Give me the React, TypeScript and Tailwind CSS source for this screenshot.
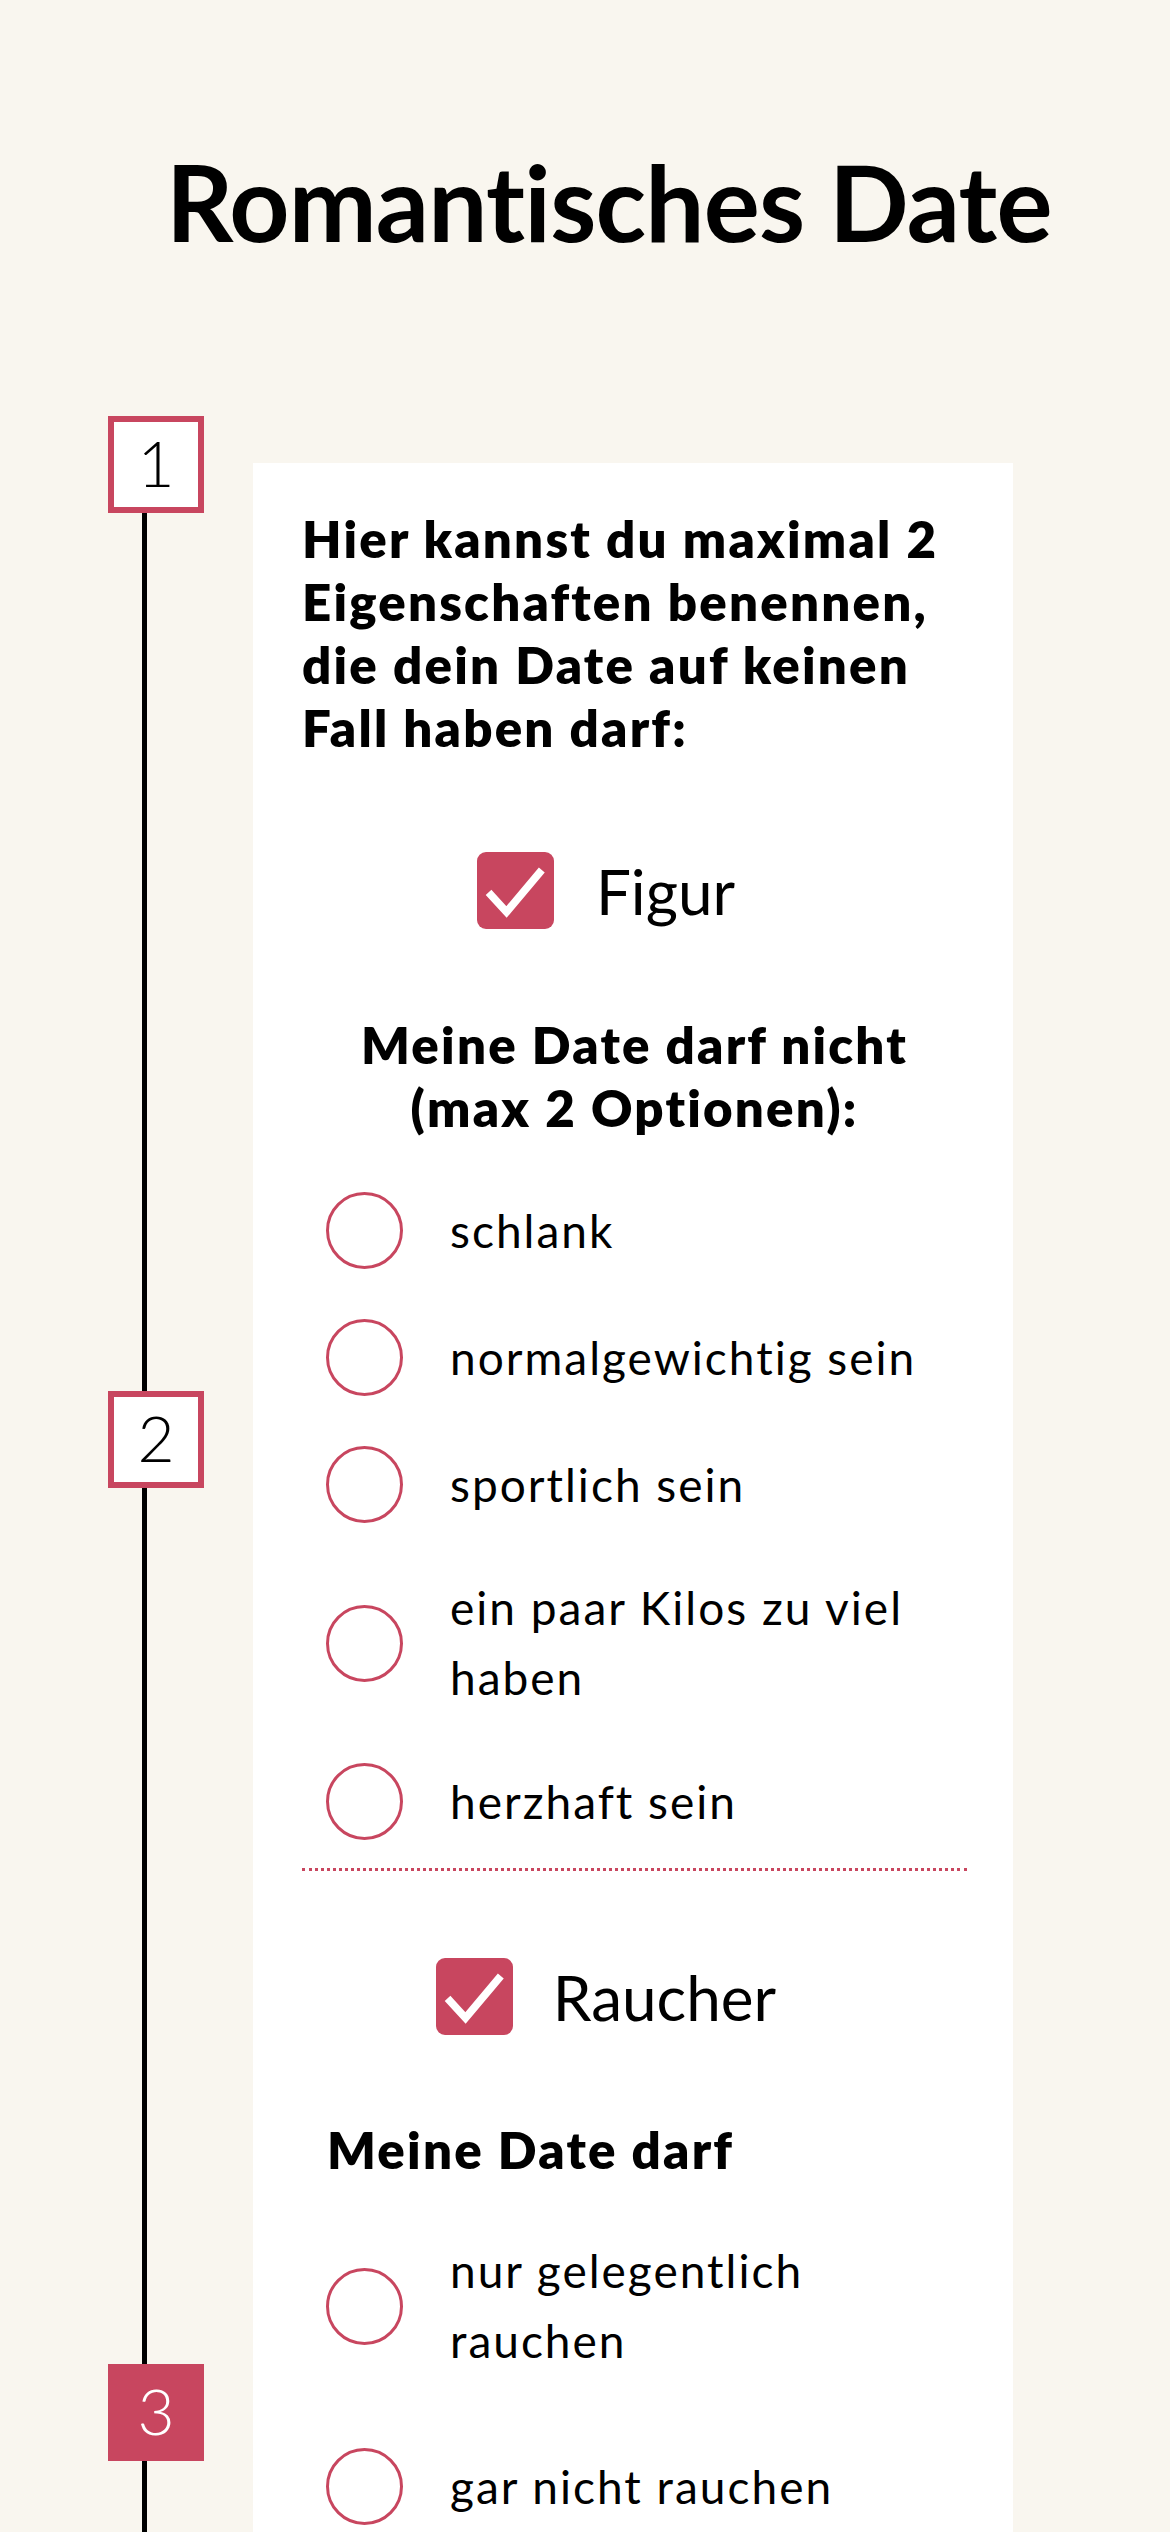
import React from 'react'

function StepBox({ n, filled }: { n: number; filled?: boolean }) {
    return (
        <div
            className={
                filled
                    ? 'flex h-[97px] w-[96px] items-center justify-center bg-[#c8465f] pb-[4px] text-[64px] font-light leading-none text-white'
                    : 'flex h-[97px] w-[96px] items-center justify-center border-[6px] border-[#c8465f] bg-white pb-[4px] text-[64px] font-light leading-none text-black'
            }
        >
            {n}
        </div>
    )
}

function Segment({ h }: { h: string }) {
    return <div className={`ml-[34px] w-[5px] bg-black ${h}`} />
}

function CheckBox() {
    return (
        <div className="flex h-[77px] w-[77px] shrink-0 items-center justify-center rounded-[9px] bg-[#c8465f]">
            <svg viewBox="0 0 24 24" className="h-[77px] w-[77px]" fill="none">
                <polyline
                    points="3.6 12.6 9.2 18.7 20.2 5.6"
                    stroke="white"
                    strokeWidth="2.4"
                    strokeLinecap="butt"
                    strokeLinejoin="miter"
                />
            </svg>
        </div>
    )
}

function Option({ lines, className = '' }: { lines: string[]; className?: string }) {
    return (
        <div className={`flex min-h-[77px] items-center pl-[24px] ${className}`}>
            <div className="h-[77px] w-[77px] shrink-0 rounded-full border-[3px] border-[#c8465f]" />
            <div className="ml-[47px] whitespace-nowrap text-[46px] leading-[70px] tracking-[2px]">
                {lines.map((l) => (
                    <div key={l}>{l}</div>
                ))}
            </div>
        </div>
    )
}

export default function App() {
    const figurOptions = [
        ['schlank'],
        ['normalgewichtig sein'],
        ['sportlich sein'],
        ['ein paar Kilos zu viel', 'haben'],
        ['herzhaft sein'],
    ]

    return (
        <div className="h-[2532px] overflow-hidden bg-[#f9f6ef] font-['Lato',sans-serif] text-black">
            {/* title */}
            <h1 className="pl-[166px] pt-[149px] text-[105px] font-bold leading-none tracking-[-0.8px]">
                Romantisches Date
            </h1>

            <div className="mt-[162px] flex">
                {/* timeline */}
                <div className="ml-[108px] flex w-[96px] flex-col">
                    <StepBox n={1} />
                    <Segment h="h-[878px]" />
                    <StepBox n={2} />
                    <Segment h="h-[876px]" />
                    <StepBox n={3} filled />
                    <Segment h="h-[200px]" />
                </div>

                {/* card */}
                <div className="ml-[49px] mt-[47px] w-[760px] bg-white pb-[200px] pl-[49px] pr-[46px] pt-[44px]">
                    <h2 className="whitespace-nowrap text-[51px] font-extrabold leading-[63px] tracking-[2.2px]">
                        Hier kannst du maximal 2<br />
                        Eigenschaften benennen,
                        <br />
                        die dein Date auf keinen
                        <br />
                        Fall haben darf:
                    </h2>

                    <div className="mt-[93px] flex items-center justify-center pr-[57px]">
                        <CheckBox />
                        <span className="ml-[42px] text-[62px] leading-none">Figur</span>
                    </div>

                    <h3 className="mt-[84px] whitespace-nowrap text-center text-[51px] font-extrabold leading-[63px] tracking-[2.2px]">
                        Meine Date darf nicht
                        <br />
                        (max 2 Optionen):
                    </h3>

                    <div className="mt-[53px] flex flex-col gap-[50px]">
                        {figurOptions.map((o) => (
                            <Option key={o[0]} lines={o} />
                        ))}
                    </div>

                    <div className="mt-[28px] border-b-[3px] border-dotted border-[#c8465f]" />

                    <div className="mt-[87px] flex items-center justify-center pr-[57px]">
                        <CheckBox />
                        <span className="ml-[40px] text-[62px] leading-none">Raucher</span>
                    </div>

                    <h3 className="mt-[83px] pl-[25px] text-[51px] font-extrabold leading-[63px] tracking-[2.2px]">
                        Meine Date darf
                    </h3>

                    <div className="mt-[55px] flex flex-col">
                        <Option lines={['nur gelegentlich', 'rauchen']} />
                        <Option lines={['gar nicht rauchen']} className="mt-[72px]" />
                    </div>
                </div>
            </div>
        </div>
    )
}
